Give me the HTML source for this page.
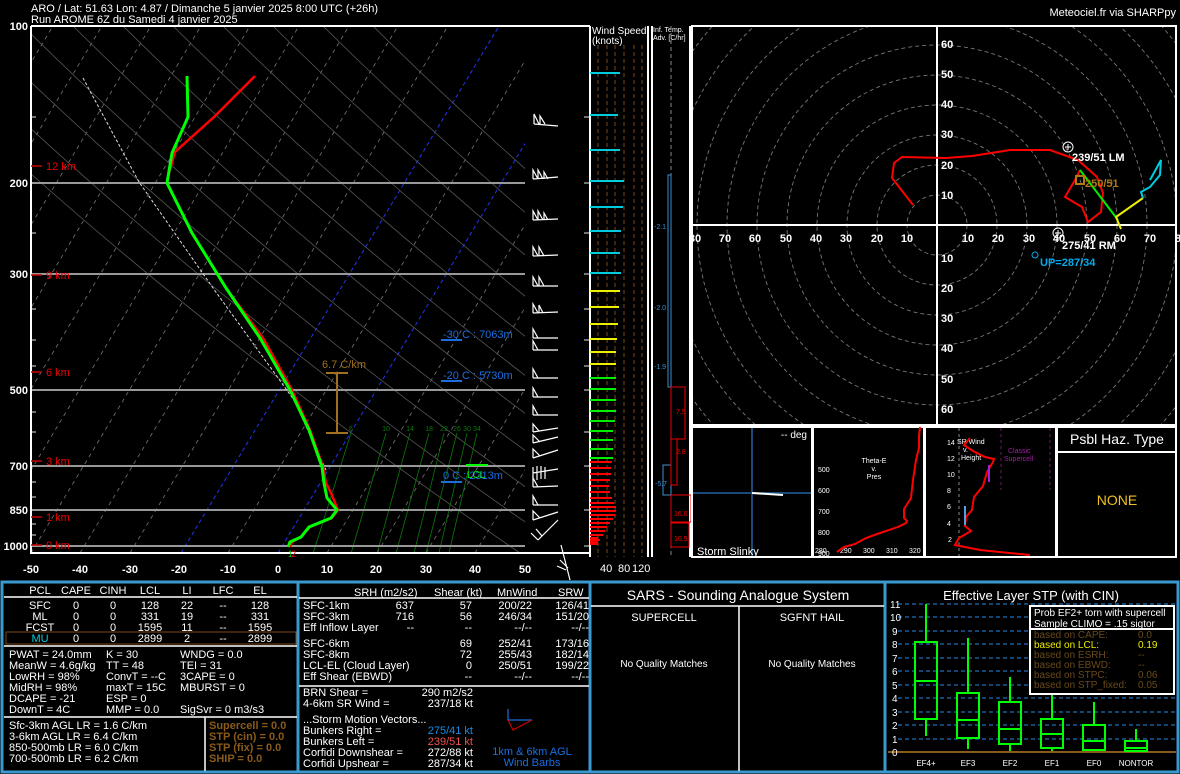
<!DOCTYPE html>
<html><head><meta charset="utf-8"><style>
html,body{margin:0;padding:0;background:#000;width:1180px;height:774px;overflow:hidden}
svg{display:block;font-family:"Liberation Sans",sans-serif}
</style></head><body>
<svg width="1180" height="774" viewBox="0 0 1180 774" xmlns="http://www.w3.org/2000/svg">
<rect width="1180" height="774" fill="#000"/>
<defs><clipPath id="sk"><rect x="31" y="26" width="494" height="527"/></clipPath>
<clipPath id="hd"><rect x="692" y="26" width="484" height="399"/></clipPath></defs>
<text x="31" y="12" fill="#fff" font-size="11">ARO / Lat: 51.63 Lon: 4.87 / Dimanche 5 janvier 2025  8:00 UTC (+26h)</text>
<text x="31" y="23" fill="#fff" font-size="11">Run AROME 6Z du Samedi 4 janvier 2025</text>
<text x="1176" y="16" fill="#fff" font-size="11" text-anchor="end">Meteociel.fr via SHARPpy</text>
<g clip-path="url(#sk)">
<g stroke="#777" stroke-width="0.8" stroke-dasharray="4,4" fill="none">
<line x1="-265" y1="553" x2="53" y2="26"/><line x1="-216" y1="553" x2="102" y2="26"/><line x1="-167" y1="553" x2="151" y2="26"/><line x1="-117" y1="553" x2="201" y2="26"/><line x1="-68" y1="553" x2="250" y2="26"/><line x1="-19" y1="553" x2="299" y2="26"/><line x1="31" y1="553" x2="349" y2="26"/><line x1="80" y1="553" x2="398" y2="26"/><line x1="130" y1="553" x2="448" y2="26"/><line x1="228" y1="553" x2="546" y2="26"/><line x1="327" y1="553" x2="645" y2="26"/><line x1="377" y1="553" x2="695" y2="26"/><line x1="426" y1="553" x2="744" y2="26"/><line x1="475" y1="553" x2="793" y2="26"/>
</g>
<g stroke="#2233ee" stroke-width="1" stroke-dasharray="4,3"><line x1="181" y1="553" x2="499" y2="26"/><line x1="278" y1="553" x2="596" y2="26"/></g>
<g stroke="#555" stroke-width="0.8" fill="none">
<path d="M-127 26 Q150 300 520 553"/><path d="M-77 26 Q200 300 570 553"/><path d="M-27 26 Q250 300 620 553"/><path d="M23 26 Q300 300 670 553"/><path d="M73 26 Q350 300 720 553"/><path d="M123 26 Q400 300 770 553"/><path d="M173 26 Q450 300 820 553"/><path d="M223 26 Q500 300 870 553"/><path d="M273 26 Q550 300 920 553"/><path d="M323 26 Q600 300 970 553"/><path d="M373 26 Q650 300 1020 553"/>
</g>
<g stroke="#0a7a0a" stroke-width="0.8"><line x1="312" y1="557" x2="351" y2="433"/><line x1="350" y1="557" x2="386" y2="433"/><line x1="376" y1="557" x2="410" y2="433"/><line x1="395" y1="557" x2="429" y2="433"/><line x1="413" y1="557" x2="444" y2="433"/><line x1="425" y1="557" x2="457" y2="433"/><line x1="438" y1="557" x2="467" y2="433"/><line x1="448" y1="557" x2="477" y2="433"/></g>
</g>
<g fill="#0a7a0a" font-size="7" text-anchor="middle"><text x="351" y="431">6</text><text x="386" y="431">10</text><text x="410" y="431">14</text><text x="429" y="431">18</text><text x="444" y="431">22</text><text x="457" y="431">26</text><text x="467" y="431">30</text><text x="477" y="431">34</text></g>
<g stroke="#999" stroke-width="2"><line x1="31" y1="183" x2="525" y2="183"/><line x1="31" y1="274" x2="525" y2="274"/><line x1="31" y1="390" x2="525" y2="390"/><line x1="31" y1="466" x2="525" y2="466"/><line x1="31" y1="510" x2="525" y2="510"/><line x1="31" y1="546" x2="525" y2="546"/></g>
<g stroke="#999" stroke-width="1.5"><line x1="31" y1="117" x2="36" y2="117"/><line x1="31" y1="233" x2="36" y2="233"/><line x1="31" y1="309" x2="36" y2="309"/><line x1="31" y1="340" x2="36" y2="340"/><line x1="31" y1="366" x2="36" y2="366"/><line x1="31" y1="412" x2="36" y2="412"/><line x1="31" y1="432" x2="36" y2="432"/><line x1="31" y1="482" x2="36" y2="482"/><line x1="31" y1="497" x2="36" y2="497"/><line x1="31" y1="524" x2="36" y2="524"/><line x1="31" y1="535" x2="36" y2="535"/>
<line x1="584" y1="117" x2="590" y2="117"/><line x1="584" y1="183" x2="590" y2="183"/><line x1="584" y1="233" x2="590" y2="233"/><line x1="584" y1="274" x2="590" y2="274"/><line x1="584" y1="309" x2="590" y2="309"/><line x1="584" y1="340" x2="590" y2="340"/><line x1="584" y1="366" x2="590" y2="366"/><line x1="584" y1="390" x2="590" y2="390"/><line x1="584" y1="432" x2="590" y2="432"/><line x1="584" y1="466" x2="590" y2="466"/><line x1="584" y1="510" x2="590" y2="510"/><line x1="584" y1="546" x2="590" y2="546"/></g>
<path d="M31 26 H590 M31 26 V553 H590" stroke="#fff" stroke-width="2" fill="none"/>
<g fill="#fff" font-size="11" font-weight="bold" text-anchor="end"><text x="28" y="30">100</text><text x="28" y="187">200</text><text x="28" y="278">300</text><text x="28" y="394">500</text><text x="28" y="470">700</text><text x="28" y="514">850</text><text x="28" y="550">1000</text></g>
<g fill="#fff" font-size="11" font-weight="bold" text-anchor="middle"><text x="31" y="573">-50</text><text x="80" y="573">-40</text><text x="130" y="573">-30</text><text x="179" y="573">-20</text><text x="228" y="573">-10</text><text x="278" y="573">0</text><text x="327" y="573">10</text><text x="376" y="573">20</text><text x="426" y="573">30</text><text x="475" y="573">40</text><text x="525" y="573">50</text></g>
<g fill="#e00" font-size="11"><text x="46" y="170">12 km</text><text x="46" y="279">9 km</text><text x="46" y="376">6 km</text><text x="46" y="465">3 km</text><text x="46" y="521">1 km</text><text x="46" y="549">0 km</text></g>
<g stroke="#c00" stroke-width="1.5"><line x1="31" y1="166" x2="42" y2="166"/><line x1="31" y1="275" x2="42" y2="275"/><line x1="31" y1="372" x2="42" y2="372"/><line x1="31" y1="461" x2="42" y2="461"/><line x1="31" y1="517" x2="42" y2="517"/><line x1="31" y1="545" x2="42" y2="545"/></g>
<polyline points="83,78 139,182 213,288 294,400 326,470" stroke="#ddd" stroke-width="1" stroke-dasharray="3,2" fill="none"/>
<polyline points="255,76 214,117 175,152 169,173 167,183 192,233 226,288 263,338 292,390 310,430 323,467 326,483 331,493 338,510 332,518 310,527 301,537 292,542 290,547" stroke="#f00" stroke-width="2.5" fill="none"/>
<polyline points="187,76 188,117 172,153 167,183 192,233 226,288 260,338 290,390 309,430 322,467 324,483 327,498 337,510 331,518 309,527 301,537 290,542 288,547" stroke="#0f0" stroke-width="3" fill="none"/>
<g fill="#1a6ee0" font-size="11"><text x="443" y="338">-30 C : 7063m</text><text x="443" y="379">-20 C : 5730m</text><text x="443" y="479">0 C : 2313m</text></g>
<g stroke="#1a6ee0" stroke-width="2"><line x1="441" y1="340" x2="462" y2="340"/><line x1="441" y1="381" x2="462" y2="381"/><line x1="441" y1="482" x2="462" y2="482"/></g>
<line x1="466" y1="465" x2="488" y2="465" stroke="#0f0" stroke-width="2"/><text x="467" y="478" fill="#0f0" font-size="10">LCL</text>
<g stroke="#a07020" stroke-width="2"><line x1="337" y1="373" x2="337" y2="433"/><line x1="326" y1="373" x2="348" y2="373"/><line x1="326" y1="433" x2="348" y2="433"/></g>
<text x="322" y="368" fill="#a07020" font-size="11">6.7 C/km</text>
<text x="288" y="557" fill="#0c0" font-size="9">1</text><text x="291" y="557" fill="#f00" font-size="9">2</text>
<g stroke="#fff" stroke-width="1.2" fill="none">
<path d="M534 124 L558 126 M534 124 L534 114 L539 124 M540 124 L540 116 L545 124"/>
<path d="M533 179 L558 177 M533 179 L533 170 L538 179 M538 179 L538 170 L543 179 M544 179 L544 172 L548 179"/>
<path d="M533 220 L558 219 M533 220 L533 211 L538 220 M538 220 L538 211 L543 220 M544 220 L544 213 L548 220"/>
<path d="M533 256 L558 255 M533 256 L533 247 L538 256 M539 256 L539 247 L544 256"/>
<path d="M533 286 L558 286 M533 286 L533 277 L538 286 M539 286 L539 277 L544 286"/>
<path d="M533 313 L558 312 M533 313 L533 304 L538 313 M539 313 L539 305 L543 313"/>
<path d="M533 338 L558 338 M533 338 L533 329 L538 338"/>
<path d="M533 350 L558 350 M533 350 L533 341 L538 350"/>
<path d="M533 378 L558 378 M533 378 L533 369 L538 378"/>
<path d="M533 397 L558 397 M533 397 L533 388 L538 397"/>
<path d="M533 415 L558 415 M533 415 L533 406 L538 415"/>
<path d="M533 432 L558 428 M533 432 L533 424 L539 431"/>
<path d="M533 443 L558 437 M533 443 L533 435 L540 442"/>
<path d="M533 458 L558 450 M533 458 L533 449 L540 456"/>
<path d="M533 473 L558 469 M533 467 L533 480 M537 466 L537 480 M541 466 L541 479 M545 467 L545 479"/>
<path d="M533 487 L558 486 M533 487 L533 478 L538 487"/>
<path d="M533 505 L558 505 M533 505 L533 496 L538 505"/>
<path d="M533 520 L558 512 M533 520 L533 511 L540 518"/>
<path d="M538 540 L558 520 M538 540 L531 533 M542 536 L536 529"/>
<path d="M561 545 L570 580 M560 560 L568 568 M557 566 L566 570"/>
</g>
<g stroke="#7a4a1a" stroke-width="1" stroke-dasharray="4,3"><line x1="598" y1="45" x2="598" y2="557"/><line x1="607" y1="45" x2="607" y2="557"/><line x1="615" y1="45" x2="615" y2="557"/><line x1="624" y1="45" x2="624" y2="557"/><line x1="634" y1="45" x2="634" y2="557"/><line x1="642" y1="45" x2="642" y2="557"/></g>
<line x1="590" y1="26" x2="590" y2="557" stroke="#fff" stroke-width="2"/>
<line x1="648" y1="26" x2="648" y2="557" stroke="#fff" stroke-width="2"/>
<line x1="652" y1="26" x2="652" y2="557" stroke="#fff" stroke-width="2"/>
<text x="592" y="34" fill="#fff" font-size="10">Wind Speed</text><text x="592" y="44" fill="#fff" font-size="10">(knots)</text>
<g stroke="#0cd" stroke-width="2"><line x1="590" y1="73" x2="620" y2="73"/><line x1="590" y1="115" x2="618" y2="115"/><line x1="590" y1="150" x2="620" y2="150"/><line x1="590" y1="181" x2="624" y2="181"/><line x1="590" y1="207" x2="623" y2="207"/><line x1="590" y1="231" x2="621" y2="231"/><line x1="590" y1="253" x2="620" y2="253"/><line x1="590" y1="273" x2="621" y2="273"/></g>
<g stroke="#ee0" stroke-width="2"><line x1="590" y1="291" x2="620" y2="291"/><line x1="590" y1="307" x2="619" y2="307"/><line x1="590" y1="324" x2="618" y2="324"/><line x1="590" y1="339" x2="617" y2="339"/><line x1="590" y1="352" x2="616" y2="352"/><line x1="590" y1="364" x2="616" y2="364"/></g>
<g stroke="#0e0" stroke-width="2"><line x1="590" y1="378" x2="616" y2="378"/><line x1="590" y1="389" x2="616" y2="389"/><line x1="590" y1="400" x2="616" y2="400"/><line x1="590" y1="411" x2="616" y2="411"/><line x1="590" y1="421" x2="615" y2="421"/><line x1="590" y1="431" x2="613" y2="431"/><line x1="590" y1="440" x2="613" y2="440"/><line x1="590" y1="449" x2="613" y2="449"/><line x1="590" y1="458" x2="613" y2="458"/></g>
<g stroke="#f00" stroke-width="2"><line x1="590" y1="462" x2="612" y2="462"/><line x1="590" y1="468" x2="611" y2="468"/><line x1="590" y1="474" x2="611" y2="474"/><line x1="590" y1="480" x2="610" y2="480"/><line x1="590" y1="486" x2="609" y2="486"/><line x1="590" y1="492" x2="610" y2="492"/><line x1="590" y1="498" x2="612" y2="498"/><line x1="590" y1="503" x2="614" y2="503"/><line x1="590" y1="507" x2="616" y2="507"/><line x1="590" y1="511" x2="616" y2="511"/><line x1="590" y1="515" x2="615" y2="515"/><line x1="590" y1="519" x2="613" y2="519"/><line x1="590" y1="523" x2="610" y2="523"/><line x1="590" y1="527" x2="607" y2="527"/><line x1="590" y1="531" x2="605" y2="531"/><line x1="590" y1="535" x2="603" y2="535"/><line x1="590" y1="540" x2="600" y2="540"/><line x1="590" y1="544" x2="598" y2="544"/></g>
<rect x="590" y="537" width="8" height="8" fill="#f00"/>
<g fill="#fff" font-size="11"><text x="600" y="572">40</text><text x="618" y="572">80</text><text x="632" y="572">120</text></g>
<text x="653" y="32" fill="#fff" font-size="7">Inf. Temp.</text><text x="653" y="40" fill="#fff" font-size="7">Adv. [C/hr]</text>
<line x1="671" y1="26" x2="671" y2="557" stroke="#888" stroke-width="1" stroke-dasharray="4,3"/>
<line x1="690" y1="26" x2="690" y2="557" stroke="#fff" stroke-width="2"/>
<rect x="668" y="175" width="3" height="212" fill="none" stroke="#3a8fd0" stroke-width="1"/>
<rect x="663" y="465" width="8" height="30" fill="none" stroke="#3a8fd0" stroke-width="1"/>
<rect x="671" y="387" width="14" height="52" fill="none" stroke="#e00" stroke-width="1"/>
<rect x="671" y="439" width="6" height="46" fill="none" stroke="#e00" stroke-width="1"/>
<rect x="671" y="495" width="20" height="27" fill="none" stroke="#e00" stroke-width="1"/>
<rect x="671" y="523" width="18" height="24" fill="none" stroke="#e00" stroke-width="1"/>
<g font-size="7"><text x="654" y="229" fill="#3a8fd0">-2.1</text><text x="654" y="310" fill="#3a8fd0">-2.0</text><text x="654" y="369" fill="#3a8fd0">-1.9</text><text x="655" y="486" fill="#3a8fd0">-5.7</text><text x="676" y="414" fill="#e00">7.5</text><text x="676" y="454" fill="#e00">2.8</text><text x="674" y="516" fill="#e00">16.0</text><text x="674" y="541" fill="#e00">10.5</text></g>
<g clip-path="url(#hd)" fill="none" stroke="#777" stroke-width="0.9" stroke-dasharray="4,3">
<circle cx="937" cy="225" r="30"/><circle cx="937" cy="225" r="60"/><circle cx="937" cy="225" r="90"/><circle cx="937" cy="225" r="120"/><circle cx="937" cy="225" r="150"/><circle cx="937" cy="225" r="180"/><circle cx="937" cy="225" r="210"/><circle cx="937" cy="225" r="240"/><circle cx="937" cy="225" r="270"/><circle cx="937" cy="225" r="300"/>
</g>
<rect x="692" y="26" width="484" height="399" fill="none" stroke="#fff" stroke-width="2"/>
<line x1="937" y1="26" x2="937" y2="425" stroke="#fff" stroke-width="2"/>
<line x1="692" y1="225" x2="1176" y2="225" stroke="#fff" stroke-width="2"/>
<g fill="#fff" font-size="11" font-weight="bold"><text x="941" y="48">60</text><text x="941" y="78">50</text><text x="941" y="108">40</text><text x="941" y="138">30</text><text x="941" y="169">20</text><text x="941" y="199">10</text><text x="941" y="262">10</text><text x="941" y="292">20</text><text x="941" y="322">30</text><text x="941" y="352">40</text><text x="941" y="383">50</text><text x="941" y="413">60</text></g>
<g fill="#fff" font-size="11" font-weight="bold" text-anchor="middle"><text x="695" y="242">80</text><text x="725" y="242">70</text><text x="755" y="242">60</text><text x="786" y="242">50</text><text x="816" y="242">40</text><text x="846" y="242">30</text><text x="877" y="242">20</text><text x="907" y="242">10</text><text x="968" y="242">10</text><text x="998" y="242">20</text><text x="1029" y="242">30</text><text x="1059" y="242">40</text><text x="1090" y="242">50</text><text x="1120" y="242">60</text><text x="1150" y="242">70</text><text x="1178" y="242">8</text></g>
<polyline points="913,205 892,178 894,163 902,157 946,158 972,156 1010,150 1050,150 1078,160 1097,177 1103,193 1101,212 1088,222 1082,207 1065,197 1075,180 1080,170" stroke="#f00" stroke-width="2" fill="none"/>
<polyline points="1080,170 1118,220" stroke="#0e0" stroke-width="2"/>
<polyline points="1121,229 1116,217 1143,198" stroke="#ee0" stroke-width="2" fill="none"/>
<polyline points="1143,198 1141,192 1150,187 1160,175 1161,160 1150,180" stroke="#0cd" stroke-width="2" fill="none"/>
<circle cx="1068" cy="147" r="5" fill="none" stroke="#fff"/><path d="M1065 147h6M1068 144v6" stroke="#fff"/>
<circle cx="1058" cy="233" r="5" fill="none" stroke="#fff"/><path d="M1055 233h6M1058 230v6" stroke="#fff"/>
<rect x="1076" y="176" width="8" height="8" fill="none" stroke="#b07a10" stroke-width="2"/>
<circle cx="1035" cy="255" r="3" fill="none" stroke="#0ae"/>
<g font-size="11" font-weight="bold"><text x="1072" y="161" fill="#fff">239/51 LM</text><text x="1085" y="187" fill="#b07a10">250/51</text><text x="1062" y="249" fill="#fff">275/41 RM</text><text x="1040" y="266" fill="#0ae">UP=287/34</text></g>
<g fill="none" stroke="#fff" stroke-width="2"><rect x="692" y="427" width="120" height="130"/><rect x="813" y="427" width="111" height="130"/><rect x="925" y="427" width="131" height="130"/><rect x="1057" y="427" width="119" height="130"/><line x1="1057" y1="452" x2="1176" y2="452"/></g>
<g stroke="#1a4a7a" stroke-width="2"><line x1="752" y1="428" x2="752" y2="556"/><line x1="693" y1="493" x2="811" y2="493"/></g>
<line x1="752" y1="493" x2="783" y2="495" stroke="#fff" stroke-width="2"/>
<text x="807" y="438" fill="#fff" font-size="10" text-anchor="end">-- deg</text>
<text x="697" y="555" fill="#fff" font-size="11">Storm Slinky</text>
<g fill="#fff" font-size="7"><text x="818" y="472">500</text><text x="818" y="493">600</text><text x="818" y="514">700</text><text x="818" y="535">800</text><text x="818" y="556">900</text><text x="815" y="553">280</text><text x="840" y="553">290</text><text x="863" y="553">300</text><text x="886" y="553">310</text><text x="909" y="553">320</text><text x="874" y="463" text-anchor="middle">Theta-E</text><text x="874" y="471" text-anchor="middle">v.</text><text x="874" y="479" text-anchor="middle">Pres</text></g>
<polyline points="920,427 919,436 919,448 916,460 913,480 911,498 904,509 904,518 907,521 906,523 898,527 880,533 866,538 855,544 844,547 837,552" stroke="#f00" stroke-width="2" fill="none"/>
<g fill="#fff" font-size="7"><text x="947" y="445">14</text><text x="947" y="461">12</text><text x="947" y="477">10</text><text x="947" y="493">8</text><text x="947" y="509">6</text><text x="947" y="526">4</text><text x="948" y="542">2</text><text x="957" y="444">SR Wind</text><text x="963" y="452">v.</text><text x="961" y="460">Height</text></g>
<g fill="#a020a0" font-size="7"><text x="1008" y="453">Classic</text><text x="1004" y="461">Supercell</text></g>
<g stroke="#888" stroke-dasharray="3,3"><line x1="959" y1="428" x2="959" y2="556"/></g>
<g stroke="#6a1a6a" stroke-dasharray="3,3"><line x1="1001" y1="428" x2="1001" y2="490"/><line x1="1050" y1="428" x2="1050" y2="490"/></g>
<polyline points="970,438 964,445 973,451 985,457 994,459 993,462 987,472 983,486 974,497 972,510 966,517 965,526 971,531 959,538 955,545 980,550 1030,555" stroke="#f00" stroke-width="2" fill="none"/>
<line x1="989" y1="465" x2="989" y2="482" stroke="#a020e0" stroke-width="2"/>
<line x1="965" y1="506" x2="965" y2="525" stroke="#5a9ae0" stroke-width="2"/>
<text x="1117" y="444" fill="#fff" font-size="14" text-anchor="middle">Psbl Haz. Type</text>
<text x="1117" y="505" fill="#f0c020" font-size="14" text-anchor="middle">NONE</text>
<rect x="2" y="582" width="1176" height="190" fill="none" stroke="#3a9ad0" stroke-width="3"/>
<g stroke="#3a9ad0" stroke-width="3"><line x1="298" y1="582" x2="298" y2="772"/><line x1="590" y1="582" x2="590" y2="772"/><line x1="885" y1="582" x2="885" y2="772"/></g>
<g stroke="#fff" stroke-width="1.5"><line x1="4" y1="597" x2="297" y2="597"/><line x1="4" y1="646" x2="297" y2="646"/><line x1="4" y1="717" x2="297" y2="717"/><line x1="205" y1="717" x2="205" y2="771"/><line x1="299" y1="598" x2="589" y2="598"/><line x1="299" y1="686" x2="589" y2="686"/><line x1="591" y1="606" x2="884" y2="606"/><line x1="739" y1="606" x2="739" y2="771"/></g>
<rect x="6" y="632" width="290" height="12" fill="none" stroke="#7a4a1a" stroke-width="1"/>
<g fill="#fff" font-size="11" text-anchor="middle">
<text x="40" y="594">PCL</text><text x="76" y="594">CAPE</text><text x="113" y="594">CINH</text><text x="150" y="594">LCL</text><text x="187" y="594">LI</text><text x="223" y="594">LFC</text><text x="260" y="594">EL</text>
<text x="40" y="609">SFC</text><text x="76" y="609">0</text><text x="113" y="609">0</text><text x="150" y="609">128</text><text x="187" y="609">22</text><text x="223" y="609">--</text><text x="260" y="609">128</text>
<text x="40" y="620">ML</text><text x="76" y="620">0</text><text x="113" y="620">0</text><text x="150" y="620">331</text><text x="187" y="620">19</text><text x="223" y="620">--</text><text x="260" y="620">331</text>
<text x="40" y="631">FCST</text><text x="76" y="631">0</text><text x="113" y="631">0</text><text x="150" y="631">1595</text><text x="187" y="631">11</text><text x="223" y="631">--</text><text x="260" y="631">1595</text>
<text x="40" y="642" fill="#0cd">MU</text><text x="76" y="642">0</text><text x="113" y="642">0</text><text x="150" y="642">2899</text><text x="187" y="642">2</text><text x="223" y="642">--</text><text x="260" y="642">2899</text>
</g>
<g fill="#fff" font-size="11">
<text x="9" y="658">PWAT = 24.0mm</text><text x="106" y="658">K = 30</text><text x="180" y="658">WNDG = 0.0</text>
<text x="9" y="669">MeanW = 4.6g/kg</text><text x="106" y="669">TT = 48</text><text x="180" y="669">TEI = 31</text>
<text x="9" y="680">LowRH = 98%</text><text x="106" y="680">ConvT = --C</text><text x="180" y="680">3CAPE = 0</text>
<text x="9" y="691">MidRH = 98%</text><text x="106" y="691">maxT = 15C</text><text x="180" y="691">MBURST = 0</text>
<text x="9" y="702">DCAPE = -21</text><text x="106" y="702">ESP = 0</text>
<text x="9" y="713">DownT = 4C</text><text x="106" y="713">MMP = 0.0</text><text x="180" y="713">SigSvr = 0 m3/s3</text>
<text x="9" y="729">Sfc-3km AGL LR = 1.6 C/km</text><text x="9" y="740">3-6km AGL LR = 6.4 C/km</text><text x="9" y="751">850-500mb LR = 6.0 C/km</text><text x="9" y="762">700-500mb LR = 6.2 C/km</text>
</g>
<g fill="#8a5a1a" font-size="11" font-weight="bold"><text x="209" y="729">Supercell = 0.0</text><text x="209" y="740">STP (cin) = 0.0</text><text x="209" y="751">STP (fix) = 0.0</text><text x="209" y="762">SHIP = 0.0</text></g>
<g fill="#fff" font-size="11">
<text x="354" y="596">SRH (m2/s2)</text><text x="434" y="596">Shear (kt)</text><text x="497" y="596">MnWind</text><text x="558" y="596">SRW</text>
<text x="303" y="609">SFC-1km</text><text x="303" y="620">SFC-3km</text><text x="303" y="631">Eff Inflow Layer</text>
<text x="303" y="647">SFC-6km</text><text x="303" y="658">SFC-8km</text><text x="303" y="669">LCL-EL (Cloud Layer)</text><text x="303" y="680">Eff Shear (EBWD)</text>
<text x="303" y="696">BRN Shear =</text><text x="303" y="707">4-6km SR Wind =</text>
<text x="303" y="723">...Storm Motion Vectors...</text><text x="303" y="734">Bunkers Right =</text><text x="303" y="745">Bunkers Left =</text><text x="303" y="756">Corfidi Downshear =</text><text x="303" y="767">Corfidi Upshear =</text>
</g>
<g fill="#fff" font-size="11" text-anchor="end">
<text x="414" y="609">637</text><text x="472" y="609">57</text><text x="532" y="609">200/22</text><text x="589" y="609">126/41</text>
<text x="414" y="620">716</text><text x="472" y="620">56</text><text x="532" y="620">246/34</text><text x="589" y="620">151/20</text>
<text x="414" y="631">--</text><text x="472" y="631">--</text><text x="532" y="631">--/--</text><text x="589" y="631">--/--</text>
<text x="472" y="647">69</text><text x="532" y="647">252/41</text><text x="589" y="647">173/16</text>
<text x="472" y="658">72</text><text x="532" y="658">255/43</text><text x="589" y="658">182/14</text>
<text x="472" y="669">0</text><text x="532" y="669">250/51</text><text x="589" y="669">199/22</text>
<text x="472" y="680">--</text><text x="532" y="680">--/--</text><text x="589" y="680">--/--</text>
<text x="473" y="696">290 m2/s2</text><text x="473" y="707">237/18 kt</text>
<text x="473" y="734" fill="#1a8ae0">275/41 kt</text><text x="473" y="745" fill="#f05050">239/51 kt</text><text x="473" y="756">272/88 kt</text><text x="473" y="767">287/34 kt</text>
</g>
<g stroke-width="1.2" fill="none"><path d="M508 709 V720 H532" stroke="#1a6ee0"/><path d="M508 720 L513 730 L532 720" stroke="#c00"/></g>
<g fill="#1a6ee0" font-size="11" text-anchor="middle"><text x="532" y="755">1km &amp; 6km AGL</text><text x="532" y="766">Wind Barbs</text></g>
<g fill="#fff" text-anchor="middle"><text x="738" y="600" font-size="14">SARS - Sounding Analogue System</text><text x="664" y="621" font-size="11">SUPERCELL</text><text x="812" y="621" font-size="11">SGFNT HAIL</text><text x="664" y="667" font-size="10">No Quality Matches</text><text x="812" y="667" font-size="10">No Quality Matches</text><text x="1031" y="600" font-size="13">Effective Layer STP (with CIN)</text></g>
<g stroke="#1a5a9a" stroke-width="1.5" stroke-dasharray="4,3"><line x1="898" y1="604" x2="1176" y2="604"/><line x1="898" y1="617" x2="1176" y2="617"/><line x1="898" y1="631" x2="1176" y2="631"/><line x1="898" y1="644" x2="1176" y2="644"/><line x1="898" y1="658" x2="1176" y2="658"/><line x1="898" y1="671" x2="1176" y2="671"/><line x1="898" y1="685" x2="1176" y2="685"/><line x1="898" y1="698" x2="1176" y2="698"/><line x1="898" y1="712" x2="1176" y2="712"/><line x1="898" y1="725" x2="1176" y2="725"/><line x1="898" y1="739" x2="1176" y2="739"/></g>
<line x1="888" y1="752" x2="1176" y2="752" stroke="#8a5a1a" stroke-width="2"/>
<g fill="#fff" font-size="10"><text x="890" y="608">11</text><text x="890" y="621">10</text><text x="892" y="635">9</text><text x="892" y="648">8</text><text x="892" y="662">7</text><text x="892" y="675">6</text><text x="892" y="689">5</text><text x="892" y="702">4</text><text x="892" y="716">3</text><text x="892" y="729">2</text><text x="892" y="743">1</text><text x="892" y="756">0</text></g>
<g stroke="#0f0" stroke-width="2" fill="none">
<path d="M926 604V642M926 719V736M915 642h22v77h-22zM915 681h22"/>
<path d="M968 638V693M968 738V749M957 693h22v45h-22zM957 720h22"/>
<path d="M1010 677V702M1010 744V751M999 702h22v42h-22zM999 729h22"/>
<path d="M1052 692V719M1052 748V751M1041 719h22v29h-22zM1041 734h22"/>
<path d="M1094 702V725M1083 725h22v25h-22zM1083 741h22"/>
<path d="M1136 729V741M1125 741h22v10h-22zM1125 748h22"/>
</g>
<g fill="#fff" font-size="8" text-anchor="middle"><text x="926" y="766">EF4+</text><text x="968" y="766">EF3</text><text x="1010" y="766">EF2</text><text x="1052" y="766">EF1</text><text x="1094" y="766">EF0</text><text x="1136" y="766">NONTOR</text></g>
<rect x="1030" y="606" width="144" height="88" fill="#000" stroke="#fff" stroke-width="2"/>
<line x1="1030" y1="629" x2="1174" y2="629" stroke="#fff" stroke-width="2"/>
<g font-size="10"><text x="1034" y="616" fill="#fff">Prob EF2+ torn with supercell</text><text x="1034" y="627" fill="#fff">Sample CLIMO = .15 sigtor</text>
<g fill="#6a4a1a"><text x="1034" y="638">based on CAPE:</text><text x="1138" y="638">0.0</text><text x="1034" y="658">based on ESRH:</text><text x="1138" y="658">--</text><text x="1034" y="668">based on EBWD:</text><text x="1138" y="668">--</text><text x="1034" y="678">based on STPC:</text><text x="1138" y="678">0.06</text><text x="1034" y="688">based on STP_fixed:</text><text x="1138" y="688">0.05</text></g>
<text x="1034" y="648" fill="#ee0">based on LCL:</text><text x="1138" y="648" fill="#ee0">0.19</text></g>
</svg>
</body></html>
